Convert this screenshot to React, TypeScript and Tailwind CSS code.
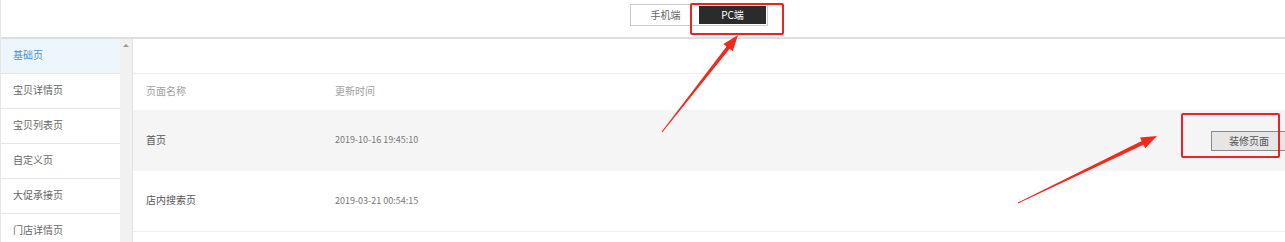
import React from "react";

const font = { fontFamily: '"Noto Sans CJK SC", "Noto Sans", sans-serif' };

const sideItems = ["基础页", "宝贝详情页", "宝贝列表页", "自定义页", "大促承接页", "门店详情页"];

export default function App() {
  return (
    <div
      className="relative w-[1285px] h-[242px] overflow-hidden bg-white border-l border-[#e6e6e6]"
      style={font}
    >
      {/* top bar */}
      <div className="h-[39px] border-b-2 border-[#dedede] pl-[629px] pt-[4px] flex items-start">
        <div className="flex border border-[#cccccc] p-px">
          <span className="w-[67px] h-[18px] flex items-center justify-center text-[10px] text-[#666] leading-none">手机端</span>
          <span className="w-[67px] h-[18px] flex items-center justify-center text-[10px] text-white bg-[#2b2b2b] leading-none">PC端</span>
        </div>
      </div>

      {/* body */}
      <div className="flex h-[203px]">
        <div className="w-[119px] flex flex-col">
          {sideItems.map((t, i) => (
            <div
              key={t}
              className={
                i === 0
                  ? "h-[35px] shrink-0 border-b border-[#e6e6e6] bg-[#edf5fd] flex items-center pl-[12px] pb-[2px] text-[10px] text-[#4a92d6] leading-none"
                  : "h-[35px] shrink-0 border-b border-[#e6e6e6] flex items-center pl-[12px] pb-[2px] text-[10px] text-[#666] leading-none"
              }
            >
              {t}
            </div>
          ))}
        </div>
        <div className="w-[12px] bg-[#f1f1f1] relative">
          <div className="absolute left-[3px] top-[5px] w-0 h-0 border-l-[3px] border-r-[3px] border-b-[3px] border-l-transparent border-r-transparent border-b-[#9a9a9a]" />
        </div>
        <div className="flex-1 border-l border-[#e2e2e2] flex flex-col">
          <div className="h-[35px] border-b border-[#eeeeee]" />
          <div className="h-[36px] flex items-center pl-[13px] pb-[3px] text-[10px] text-[#a0a0a0] leading-none">
            <span className="w-[189px]">页面名称</span>
            <span>更新时间</span>
          </div>
          <div className="h-[61px] bg-[#f5f5f5] flex items-center pl-[13px] text-[10px] text-[#555] leading-none">
            <span className="w-[189px] pb-[2px]">首页</span>
            <span className="text-[9px] text-[#777] pb-[2px]">2019-10-16 19:45:10</span>
            <div className="flex-1 flex justify-end -mr-[2px]">
              <button className="w-[76px] h-[20px] border border-[#8a8a8a] bg-[#e6e6e6] text-[10px] text-[#555] flex items-center justify-center leading-none">
                装修页面
              </button>
            </div>
          </div>
          <div className="h-[61px] border-b border-[#eeeeee] flex items-center pl-[13px] pb-[2px] text-[10px] text-[#555] leading-none">
            <span className="w-[189px]">店内搜索页</span>
            <span className="text-[9px] text-[#777]">2019-03-21 00:54:15</span>
          </div>
        </div>
      </div>

      {/* annotations */}
      <div className="absolute left-[689px] top-[3px] w-[94px] h-[32px] border-2 border-[#ee2222] rounded-[2px]" />
      <div className="absolute left-[1180px] top-[113px] w-[99px] h-[45px] border-2 border-[#ee2222] rounded-[2px]" />
      <svg className="absolute left-0 top-0 pointer-events-none" width="1285" height="242" viewBox="0 0 1285 242">
        <polygon
          fill="#f02a1f"
          points="661.4,132.3 728.7,48.8 731.8,51.3 737,35 722.4,43.9 725.5,46.4 660.6,131.7"
        />
        <polygon
          fill="#f02a1f"
          points="1017.2,203.45 1142.5,144.7 1144.2,148.3 1156,136 1139.0,137.5 1140.7,141.1 1016.8,202.55"
        />
      </svg>
    </div>
  );
}
